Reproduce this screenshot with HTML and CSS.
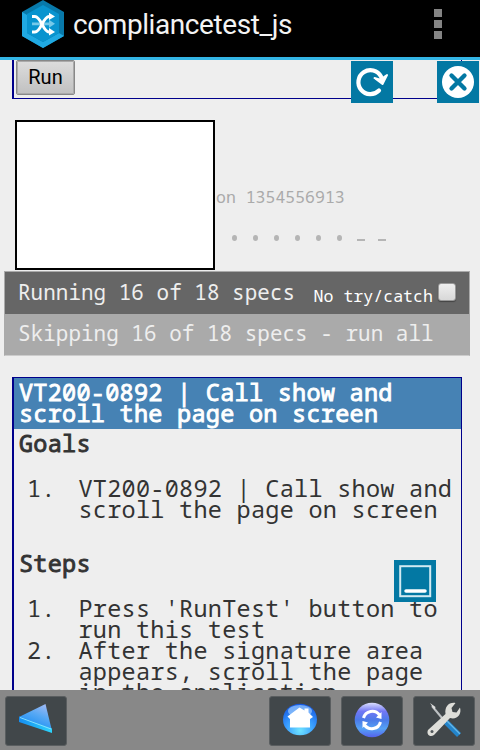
FILE: index.html
```html
<!DOCTYPE html>
<html lang="en">
<head>
<meta charset="utf-8">
<title>compliancetest_js</title>
<link rel="stylesheet" href="styles.css">
</head>
<body>
<div class="screen">
  <header class="appbar">
    <svg class="logo" width="42" height="48" viewBox="0 0 42 48">
      <path fill="#0879aa" d="M21 0 42 12V36L21 48 0 36V12z"/>
      <path fill="#20a9e2" d="M0 12 5 15V33L21 42 37 33 42 36 21 48 0 36z"/>
      <path fill="#0994cf" d="M21 5 37 14V33L21 42 5 33V14z"/>
      <path fill="#76c9e9" d="M10 25.200h17v2.600l6-4-6-4v2.700H10z"/>
      <g fill="none" stroke="#fff" stroke-width="2.800"><path d="M10 32h3c6 0 8-15.500 14-15.500h2"/><path d="M10 16.500h3c6 0 8 15.500 14 15.500h2"/></g>
      <path fill="#fff" d="M27 12.700 33 16.500 27 20zM27 28 33 32 27 35.500z"/>
    </svg>
    <h1 class="title">compliancetest_js</h1>
    <div class="overflow"><i></i><i></i><i></i></div>
  </header>
  <main class="page">
    <section class="runner"><button class="run">Run</button></section>
    <section class="report">
      <div class="signature"></div>
      <div class="version">on 1354556913</div>
      <div class="symbols"><i></i><i></i><i></i><i></i><i></i><i></i><i class="dash"></i><i class="dash"></i></div>
    </section>
    <section class="bars">
      <div class="bar running"><span>Running 16 of 18 specs</span><label>No try/catch<b class="check"></b></label></div>
      <div class="bar skipping"><span>Skipping 16 of 18 specs - run all</span></div>
    </section>
    <section class="spec">
      <h2>VT200-0892 | Call show and<br>scroll the page on screen</h2>
      <h3>Goals</h3>
      <ol class="goals"><li><span class="num">1.</span><span>VT200-0892 | Call show and<br>scroll the page on screen</span></li></ol>
      <h3>Steps</h3>
      <ol><li><span class="num">1.</span><span>Press 'RunTest' button to<br>run this test</span></li><li><span class="num">2.</span><span>After the signature area<br>appears, scroll the page<br>in the application</span></li></ol>
    </section>
  </main>
  <footer class="toolbar">
    <div class="tool back"><svg width="60" height="48" viewBox="0 0 60 48">
      <defs><linearGradient id="face" x1="1" y1="0" x2=".5" y2="1"><stop offset="0" stop-color="#b0bdf4"/><stop offset=".5" stop-color="#55a8f5"/><stop offset="1" stop-color="#168bf2"/></linearGradient><linearGradient id="edge"><stop stop-color="#168df0"/><stop offset="1" stop-color="#2cd4fb"/></linearGradient></defs>
      <path fill="url(#face)" d="M39.500 7 13 20 46 34z"/><path fill="url(#edge)" d="M13 19.500 46 31.500V36L13 25z"/><path d="M14 20.500 45 32" stroke="#88ddff" fill="none"/></svg></div>
    <div class="tool"><svg width="60" height="48" viewBox="0 0 60 48">
      <defs><radialGradient id="home" cx=".5" cy=".85" r=".85"><stop stop-color="#70e4ff"/><stop offset=".5" stop-color="#389cff"/><stop offset="1" stop-color="#1556df"/></radialGradient></defs>
      <ellipse cx="30" cy="22.500" rx="17" ry="15.800" fill="url(#home)"/><ellipse cx="30" cy="14" rx="12" ry="6" fill="#9dccff" opacity=".7"/><path fill="#fff" d="m17.500 19.500 12-9 5 3v-2h4v4l4.500 4.500-3 2v8.500H20V22z"/></svg></div>
    <div class="tool"><svg width="60" height="48" viewBox="0 0 60 48">
      <defs><linearGradient id="sync" x2="0" y2="1"><stop stop-color="#dce0ff"/><stop offset=".25" stop-color="#7277f5"/><stop offset=".5" stop-color="#4b7ae8"/><stop offset=".75" stop-color="#55a2f5"/><stop offset="1" stop-color="#5561ed"/></linearGradient></defs>
      <circle cx="30" cy="23" r="17.300" fill="url(#sync)"/><g fill="none" stroke="#fff" stroke-width="3"><path d="M21.500 21a9 9 0 0 1 16-3"/><path d="M38.500 25a9 9 0 0 1-16 3"/></g><path fill="#fff" d="M34 20.500 39.500 15v7zM26 25.500 20.500 31v-7z"/></svg></div>
    <div class="tool"><svg width="60" height="48" viewBox="0 0 60 48">
      <path d="m18 9 15 18" stroke="#bdc1c3" stroke-width="2"/><path d="m16 6 5.500 4-1 3z" fill="#ddd"/>
      <path d="m32 25 13 13" stroke="#2384ca" stroke-width="5.500"/><path d="m33 24 13 13" stroke="#66b7e7" stroke-width="1.300"/>
      <path fill="#deded9" d="M31.500 17c-1-7 3-12 10-11l-4 5 1 4 4 .5 3.500-5c2 7-3 12.500-10 10.500L20 38c-4 3-8-1-6-5z"/><circle cx="18" cy="34.500" r="1.500" fill="#50565a"/></svg></div>
  </footer>
  <div class="float reload"><svg width="42" height="42" viewBox="0 0 42 42"><path fill="none" stroke="#fff" stroke-width="4.200" stroke-linecap="round" d="M28 29.500A12 12 0 1 1 30 15.500"/><path fill="#fff" stroke="#fff" stroke-width="2" stroke-linejoin="round" d="m23.500 17 5 1.500 3-1.500 4.500-3-4.500 9z"/></svg></div>
  <div class="float close"><svg width="42" height="42" viewBox="0 0 42 42"><circle cx="21" cy="21" r="16" fill="#fff"/><path d="m14.500 14.500 13 13m0-13-13 13" stroke="#0378a3" stroke-width="4.300" stroke-linecap="round"/></svg></div>
  <div class="float minimize"><svg width="42" height="42" viewBox="0 0 42 42"><rect x="6.200" y="6.200" width="30" height="30" fill="none" stroke="#d2eaf2" stroke-width="2"/><path d="M12 31h19" stroke="#fff" stroke-width="3.500" stroke-linecap="round"/></svg></div>
</div>
</body>
</html>
```
FILE: styles.css
```css
* { box-sizing: border-box; }
body { margin: 0; background: #eee; }
.screen { position: relative; width: 480px; height: 750px; overflow: hidden; display: flex; flex-direction: column; background: #eee; font-family: "Droid Sans Mono", "Noto Sans Mono", "DejaVu Sans Mono", monospace; color: #333; }
svg { display: block; }
.appbar { height: 60px; flex: none; display: flex; align-items: flex-start; padding-left: 22px; background: #000; border-bottom: 3px solid #33b5e5; }
.title { margin: 0 0 0 9px; font: 400 28px/50px Roboto, sans-serif; letter-spacing: -.420px; color: #f3f3f3; flex: 1; white-space: nowrap; }
.overflow { display: flex; flex-direction: column; gap: 3px; margin: 9px 38px 0 0; }
.overflow i { width: 8px; height: 8px; background: #848484; }
.page { flex: 1; min-height: 0; overflow: hidden; }
.runner { margin-left: 12px; width: 450px; height: 39px; border: solid #00008b; border-width: 0 1px 1px 2px; padding-left: 2px; }
.run { display: block; width: 59px; height: 35px; padding: 0 0 1px; border: 1px solid #888; outline: 1px solid #aaa; outline-offset: -2px; border-radius: 2px; background: linear-gradient(#ddd, #c0c0c0); font: 20px/32px Roboto, sans-serif; color: #000; }
.report { position: relative; height: 172px; padding: 88px 0 0 216px; color: #aaa; }
.signature { position: absolute; left: 15px; top: 21px; width: 200px; height: 150px; background: #fff; border: 2px solid #000; }
.version { font-size: 16.500px; line-height: 20px; white-space: pre; }
.symbols { display: flex; gap: 16px; margin: 27px 0 0 16px; height: 8px; align-items: center; }
.symbols i { width: 5px; height: 6px; border-radius: 50%; background: #b5b5b5; }
.symbols .dash { width: 8px; height: 2px; border-radius: 0; margin: 4px -1.500px 0; }
.bars { margin-left: 4px; width: 466px; height: 85px; border: 1px solid #aaa; border-bottom-color: #ccc; }
.bar { height: 42px; display: flex; align-items: center; padding: 0 12px 3px 13px; font-size: 20.900px; letter-spacing: .060px; line-height: 38px; color: #eee; white-space: pre; }
.running { background: #666; }
.skipping { height: 41px; background: #aaa; }
.running label { display: flex; align-items: center; margin-left: auto; font-size: 16.600px; letter-spacing: 0; color: #fff; padding-top: 9px; }
.check { width: 18px; height: 18px; margin: -9px 1px 0 5px; border: 1px solid #999; border-radius: 3px; background: linear-gradient(#eee, #d8d8d8); box-shadow: 0 1px 1px #444; }
.spec { margin: 21px 0 0 12px; width: 450px; height: 400px; border: solid #00008b; border-width: 1px 1px 1px 2px; font-size: 23.500px; letter-spacing: .270px; line-height: 21px; white-space: nowrap; }
.spec h2, .spec h3 { font-size: inherit; font-weight: 400; -webkit-text-stroke: .900px currentColor; }
.spec h2 { margin: 0; padding: 4px 4px 5px 5px; height: 51px; background: #4682b4; color: #fff; }
.spec h3 { margin: 4px 4px 24px 5px; }
.spec ol { list-style: none; margin: 0; padding: 0; }
.spec .goals { margin-bottom: 33px; }
.spec li { display: flex; }
.num { width: 64.500px; padding-left: 13px; flex: none; }
.toolbar { height: 60px; flex: none; display: flex; gap: 10px; align-items: center; padding: 1px 5px 0; background: #888; }
.tool { width: 62px; height: 50px; border: 1px solid #5a5e60; border-radius: 3px; background: #41474a; }
.back { margin-right: auto; }
.float { position: absolute; width: 42px; height: 42px; background: #0378a3; }
.reload { left: 351px; top: 61px; }
.close { left: 437px; top: 61px; }
.minimize { left: 394px; top: 560px; }
```
